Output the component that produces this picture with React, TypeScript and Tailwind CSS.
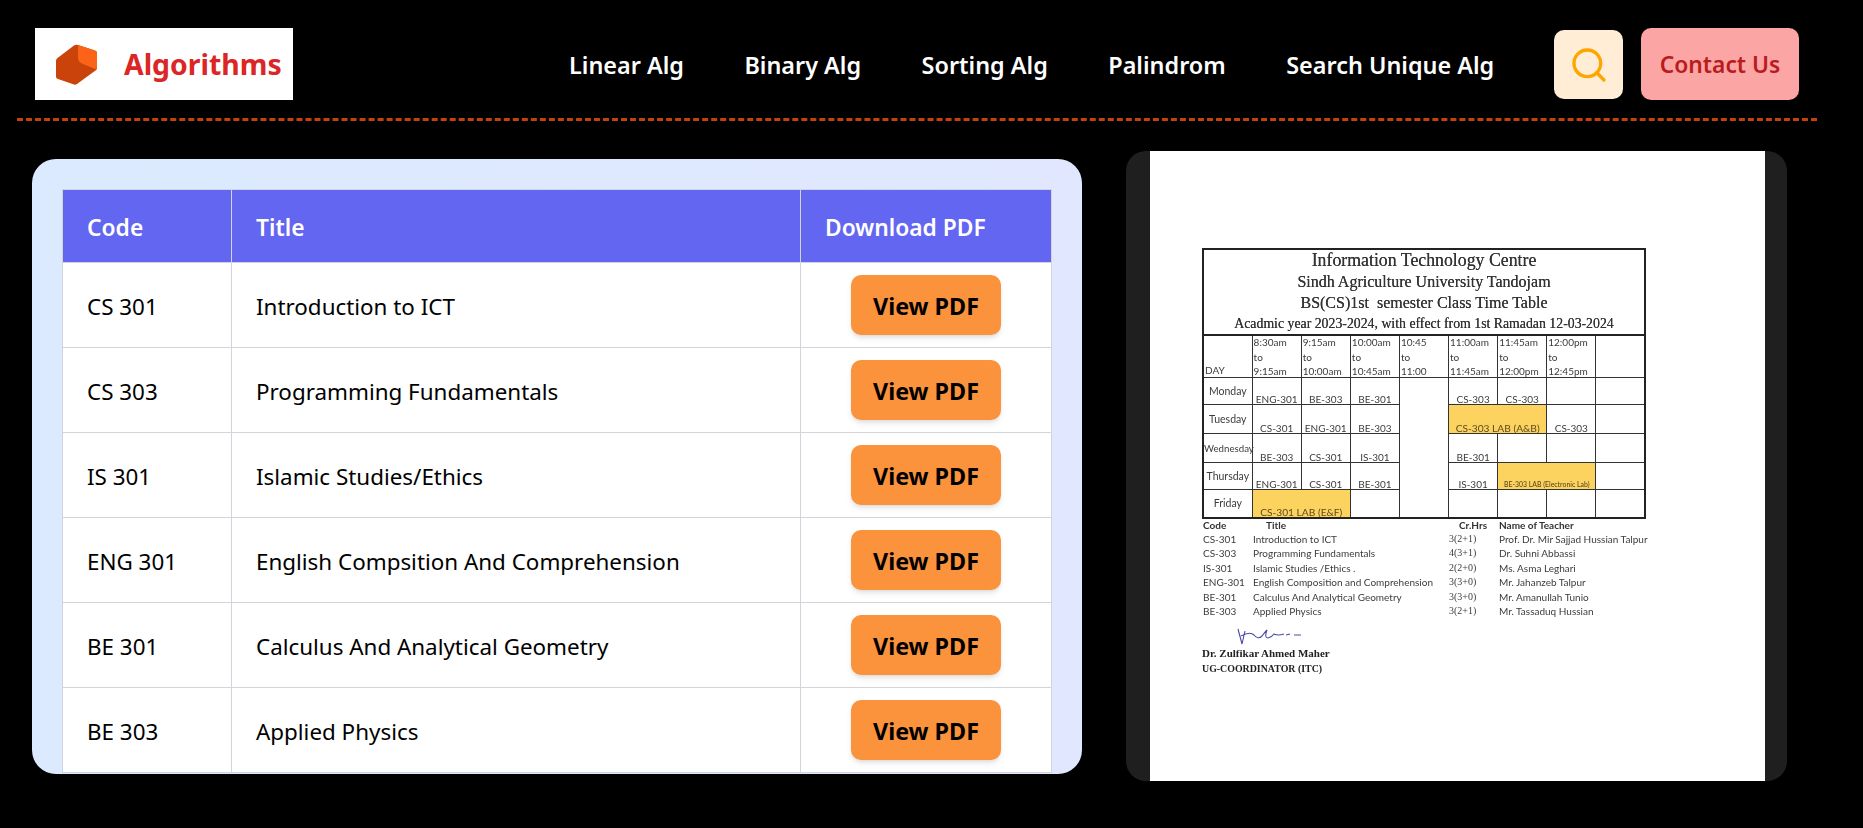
import { Search } from 'lucide-react';

const NAV = ['Linear Alg', 'Binary Alg', 'Sorting Alg', 'Palindrom', 'Search Unique Alg'];

const COURSES = [
  { code: 'CS 301', title: 'Introduction to ICT' },
  { code: 'CS 303', title: 'Programming Fundamentals' },
  { code: 'IS 301', title: 'Islamic Studies/Ethics' },
  { code: 'ENG 301', title: 'English Compsition And Comprehension' },
  { code: 'BE 301', title: 'Calculus And Analytical Geometry' },
  { code: 'BE 303', title: 'Applied Physics' },
];

const TIMES = [
  ['8:30am', '9:15am'],
  ['9:15am', '10:00am'],
  ['10:00am', '10:45am'],
  ['10:45', '11:00'],
  ['11:00am', '11:45am'],
  ['11:45am', '12:00pm'],
  ['12:00pm', '12:45pm'],
];

const TEACHERS = [
  ['CS-301', 'Introduction to ICT', '3(2+1)', 'Prof. Dr. Mir Sajjad Hussian Talpur'],
  ['CS-303', 'Programming Fundamentals', '4(3+1)', 'Dr. Suhni Abbassi'],
  ['IS-301', 'Islamic Studies /Ethics .', '2(2+0)', 'Ms. Asma Leghari'],
  ['ENG-301', 'English Composition and Comprehension', '3(3+0)', 'Mr. Jahanzeb Talpur'],
  ['BE-301', 'Calculus And Analytical Geometry', '3(3+0)', 'Mr. Amanullah Tunio'],
  ['BE-303', 'Applied Physics', '3(2+1)', 'Mr. Tassaduq Hussian'],
];

function Logo() {
  return (
    <svg width="41" height="41" viewBox="0 0 41 41" className="shrink-0">
      <path
        d="M22 1 L39 6.5 Q41 7 41 9 L41 24 Q41 25.500 39.5 26.500 L21 40 Q19.5 41 18 40.5 L2 35 Q0 34.500 0 32.500 L0 17 Q0 15 1.500 14 L18 1.500 Q20 0.300 22 1 Z"
        fill="#c9430a"
      />
      <path
        d="M22 1 L39 6.5 Q41 7 41 9 L41 24 Q41 25 40.500 25.500 L27 20 Q22 18 22 14 Z"
        fill="#fb6418"
      />
    </svg>
  );
}

function Cell({ children, className = '' }: { children?: React.ReactNode; className?: string }) {
  return (
    <td className={`border border-[#333] p-0 text-center align-bottom text-[10px] leading-[10px] text-[#3c3c3c] ${className}`}>
      {children}
    </td>
  );
}

function Day({ name, small }: { name: string; small?: boolean }) {
  return (
    <td className={`border border-[#333] p-0 text-center align-middle leading-[12px] text-[#3c3c3c] ${small ? 'text-[9.700px]' : 'text-[10.500px]'}`}>
      {name}
    </td>
  );
}

function Lab({ span, small, children }: { span: number; small?: boolean; children: React.ReactNode }) {
  return (
    <td
      colSpan={span}
      className={`border border-[#333] bg-[#fdd35f] p-0 text-center align-bottom leading-[10px] text-[#5a4a20] ${small ? 'text-[6.900px] font-medium' : 'text-[10.200px]'}`}
    >
      {children}
    </td>
  );
}

// the scanned time table on the right, rebuilt as a real table
function TimeTable() {
  return (
    <div className="flex h-full w-[615px] flex-col bg-white pl-[52px] pt-[97px] blur-[0.35px]">
      <div className="flex h-[86px] w-[444px] flex-col items-center border-2 border-b-0 border-[#222] font-['Liberation_Serif',serif] text-[#333] [text-shadow:0_0_0.6px_#333]">
        <p className="text-[17.800px] leading-[21px]">Information Technology Centre</p>
        <p className="text-[16px] leading-[21px]">Sindh Agriculture University Tandojam</p>
        <p className="text-[16px] leading-[21px]">BS(CS)1st&nbsp; semester Class Time Table</p>
        <p className="text-[13.800px] leading-[21px]">Acadmic year 2023-2024, with effect from 1st Ramadan 12-03-2024</p>
      </div>
      <table className="w-[444px] table-fixed border-collapse border-2 border-[#222] font-['Lato',sans-serif]">
        <tbody>
          <tr>
            <td className="border border-[#333] p-0 pl-[1px] align-bottom text-[10px] leading-[14px] text-[#3c3c3c]">DAY</td>
            {TIMES.map((t) => (
              <td key={t[0]} className="border border-[#333] p-0 pl-[1px] align-top text-[10px] leading-[14.500px] text-[#3c3c3c]">
                <div className="-mt-[1px] h-[42px]">
                  {t[0]}
                  <br />
                  to
                  <br />
                  {t[1]}
                </div>
              </td>
            ))}
            <td className="border border-[#333]" />
          </tr>
          <tr className="h-[27px]">
            <Day name="Monday" />
            <Cell>ENG-301</Cell>
            <Cell>BE-303</Cell>
            <Cell>BE-301</Cell>
            <td rowSpan={5} className="border border-[#333]" />
            <Cell>CS-303</Cell>
            <Cell>CS-303</Cell>
            <Cell />
            <Cell />
          </tr>
          <tr className="h-[29px]">
            <Day name="Tuesday" />
            <Cell>CS-301</Cell>
            <Cell>ENG-301</Cell>
            <Cell>BE-303</Cell>
            <Lab span={2}>CS-303 LAB (A&amp;B)</Lab>
            <Cell>CS-303</Cell>
            <Cell />
          </tr>
          <tr className="h-[29px]">
            <Day name="Wednesday" small />
            <Cell>BE-303</Cell>
            <Cell>CS-301</Cell>
            <Cell>IS-301</Cell>
            <Cell>BE-301</Cell>
            <Cell />
            <Cell />
            <Cell />
          </tr>
          <tr className="h-[27px]">
            <Day name="Thursday" />
            <Cell>ENG-301</Cell>
            <Cell>CS-301</Cell>
            <Cell>BE-301</Cell>
            <Cell>IS-301</Cell>
            <Lab span={2} small>
              BE-303 LAB (Electronic Lab)
            </Lab>
            <Cell />
          </tr>
          <tr className="h-[28px]">
            <Day name="Friday" />
            <Lab span={2}>CS-301 LAB (E&amp;F)</Lab>
            <Cell />
            <Cell />
            <Cell />
            <Cell />
            <Cell />
          </tr>
        </tbody>
      </table>
      <div className="-mt-[1px] font-['Lato',sans-serif] text-[10px] leading-[14.400px] text-[#3c3c3c]">
        <div className="grid grid-cols-[64px_183px_50px_auto] font-bold text-[#333]">
          <span className="pl-[1px]">Code</span>
          <span>Title</span>
          <span className="pl-[10px]">Cr.Hrs</span>
          <span>Name of Teacher</span>
        </div>
        {TEACHERS.map((t) => (
          <div key={t[0]} className="grid grid-cols-[51px_196px_50px_auto] whitespace-nowrap">
            <span className="pl-[1px]">{t[0]}</span>
            <span>{t[1]}</span>
            <span className="font-['Liberation_Serif',serif]">{t[2]}</span>
            <span>{t[3]}</span>
          </div>
        ))}
      </div>
      <svg width="66" height="18" viewBox="0 0 66 18" className="ml-[34px] mt-[10px]" fill="none" stroke="#4a4aa0" strokeWidth="1.100">
        <path d="M2 1 L6 16 L9 3 M5 8 Q14 3 18 7 Q22 12 26 8 Q29 4 31 2 Q28 10 32 10 Q36 9 38 6 Q42 8 48 6 M50 7 L54 6 M58 7 L65 7" />
      </svg>
      <p className="font-['Liberation_Serif',serif] text-[11px] font-bold leading-[14.500px] text-[#222]">Dr. Zulfikar Ahmed Maher</p>
      <p className="mt-[1px] font-['Liberation_Serif',serif] text-[9.900px] font-bold leading-[14.500px] text-[#222]">UG-COORDINATOR (ITC)</p>
    </div>
  );
}

export default function App() {
  return (
    <div className="min-h-screen bg-black font-['Noto_Sans',sans-serif]">
      <header className="ml-[17px] flex h-[121px] w-[1800px] items-start border-b-[3px] border-dashed border-[#c2410c] pl-[18px] pr-[18px] pt-[28px]">
        <div className="flex h-[72px] w-[258px] items-center gap-[27px] bg-white pl-[21px]">
          <Logo />
          <span className="pt-[1px] text-[28.400px] font-bold text-[#dc2626]">Algorithms</span>
        </div>
        <nav className="ml-[276px] flex h-[72px] items-center gap-[60.500px] pt-[4px]">
          {NAV.map((n) => (
            <a key={n} className="text-[23.400px] font-semibold whitespace-nowrap text-white">
              {n}
            </a>
          ))}
        </nav>
        <button className="ml-auto mt-[2px] flex h-[69px] w-[69px] items-center justify-center rounded-[10px] bg-[#ffedd5]">
          <Search size={40} strokeWidth={2} className="text-[#ffa500]" />
        </button>
        <button className="ml-[18px] h-[72px] w-[158px] rounded-[10px] bg-[#fca5a5] pt-[3px] text-[22.800px] font-semibold text-[#b91c1c]">
          Contact Us
        </button>
      </header>
      <main className="flex items-start pl-[32px] pt-[30px]">
        <section className="mt-[8px] h-[615px] w-[1050px] overflow-hidden rounded-[24px] bg-gradient-to-r from-[#dbeafe] to-[#e0e7ff] px-[30px] pt-[30px]">
          <table className="w-full table-fixed border-collapse">
            <colgroup>
              <col className="w-[169px]" />
              <col className="w-[569px]" />
              <col />
            </colgroup>
            <thead>
              <tr className="h-[73px] bg-[#6366f1] text-[22.800px] font-semibold text-white">
                <th className="border border-[#d1d5db] pl-[24px] pt-[4px] text-left font-semibold">Code</th>
                <th className="border border-[#d1d5db] pl-[24px] pt-[4px] text-left font-semibold">Title</th>
                <th className="border border-[#d1d5db] pl-[24px] pt-[4px] text-left font-semibold">Download PDF</th>
              </tr>
            </thead>
            <tbody>
              {COURSES.map((c) => (
                <tr key={c.code} className="h-[85px] bg-white text-[22.400px] text-black">
                  <td className="border border-[#d1d5db] pl-[24px] pt-[3px]">{c.code}</td>
                  <td className="border border-[#d1d5db] pl-[24px] pt-[3px]">{c.title}</td>
                  <td className="border border-[#d1d5db] text-center">
                    <button className="h-[60px] w-[150px] rounded-[10px] bg-[#fb923c] pt-[2px] text-[23.300px] font-bold text-black shadow-md">
                      View PDF
                    </button>
                  </td>
                </tr>
              ))}
            </tbody>
          </table>
        </section>
        <aside className="ml-[44px] flex h-[630px] w-[661px] justify-center overflow-hidden rounded-[20px] bg-[#1f1f1f] pl-[2px]">
          <TimeTable />
        </aside>
      </main>
    </div>
  );
}
